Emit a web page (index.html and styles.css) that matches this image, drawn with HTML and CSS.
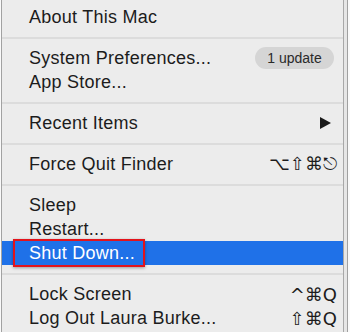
FILE: index.html
```html
<!DOCTYPE html>
<html lang="en">
<head>
    <meta charset="UTF-8">
    <meta name="viewport" content="width=device-width, initial-scale=1.0">
    <title>Apple menu</title>
    <link rel="stylesheet" href="styles.css">
</head>
<body>

    <div class="menu">
        <div class="item"><span class="label">About This Mac</span></div>
        <div class="sep"></div>

        <div class="item">
            <span class="label">System Preferences...</span>
            <span class="badge">1 update</span>
        </div>
        <div class="item"><span class="label">App Store...</span></div>
        <div class="sep"></div>

        <div class="item">
            <span class="label">Recent Items</span>
            <svg class="arrow" width="11" height="12" viewBox="0 0 11 12"><path d="M0 0 L11 6 L0 12 Z" fill="#1a1a1a"/></svg>
        </div>
        <div class="sep"></div>

        <div class="item">
            <span class="label">Force Quit Finder</span>
            <span class="keys">⌥⇧⌘⎋</span>
        </div>
        <div class="sep"></div>

        <div class="item"><span class="label">Sleep</span></div>
        <div class="item"><span class="label">Restart...</span></div>
        <div class="item active">
            <span class="label">Shut Down...</span>
            <div class="mark"></div>
        </div>
        <div class="sep"></div>

        <div class="item">
            <span class="label">Lock Screen</span>
            <span class="keys">^⌘Q</span>
        </div>
        <div class="item">
            <span class="label">Log Out Laura Burke...</span>
            <span class="keys">⇧⌘Q</span>
        </div>
    </div>

</body>
</html>
```

FILE: styles.css
```css
body {
    margin: 0;
    background: #fafafa;
    font-family: 'Liberation Sans', Arial, sans-serif;
}
.menu {
    margin-left: 1px;
    width: 341px;
    height: 327px;
    padding-top: 5px;
    background: #ececec;
    border-left: 1px solid #a2a2a2;
    border-right: 1px solid #a8a8a8;
    box-shadow: 3px 0 0 #e6e6e6, 4px 0 0 #a0a0a0;
}
.item {
    position: relative;
    display: flex;
    align-items: center;
    justify-content: space-between;
    height: 24px;
    padding-left: 27px;
    padding-right: 6px;
    font-size: 18px;
    letter-spacing: 0.25px;
    color: #1c1c1c;
}
.item.active {
    background: #1f71e8;
    color: white;
}
.sep {
    height: 17px;
    display: flex;
    align-items: center;
}
.sep::before {
    content: "";
    display: block;
    width: 100%;
    height: 2px;
    background: #dcdcdc;
}
.badge {
    font-size: 14px;
    letter-spacing: 0;
    color: #2a2a2a;
    background: #d5d5d5;
    border-radius: 11px;
    height: 22px;
    line-height: 22px;
    width: 79px;
    text-align: center;
    margin-right: 3px;
}
.arrow {
    margin-right: 6px;
}
.keys {
    font-family: 'DejaVu Sans', sans-serif;
    font-size: 18px;
    letter-spacing: 0;
}
.mark {
    position: absolute;
    left: 11px;
    top: -2px;
    width: 128px;
    height: 24px;
    border: 2px solid #e3131b;
    box-shadow: 0 1px 3px rgba(0,0,0,0.35);
}
```
